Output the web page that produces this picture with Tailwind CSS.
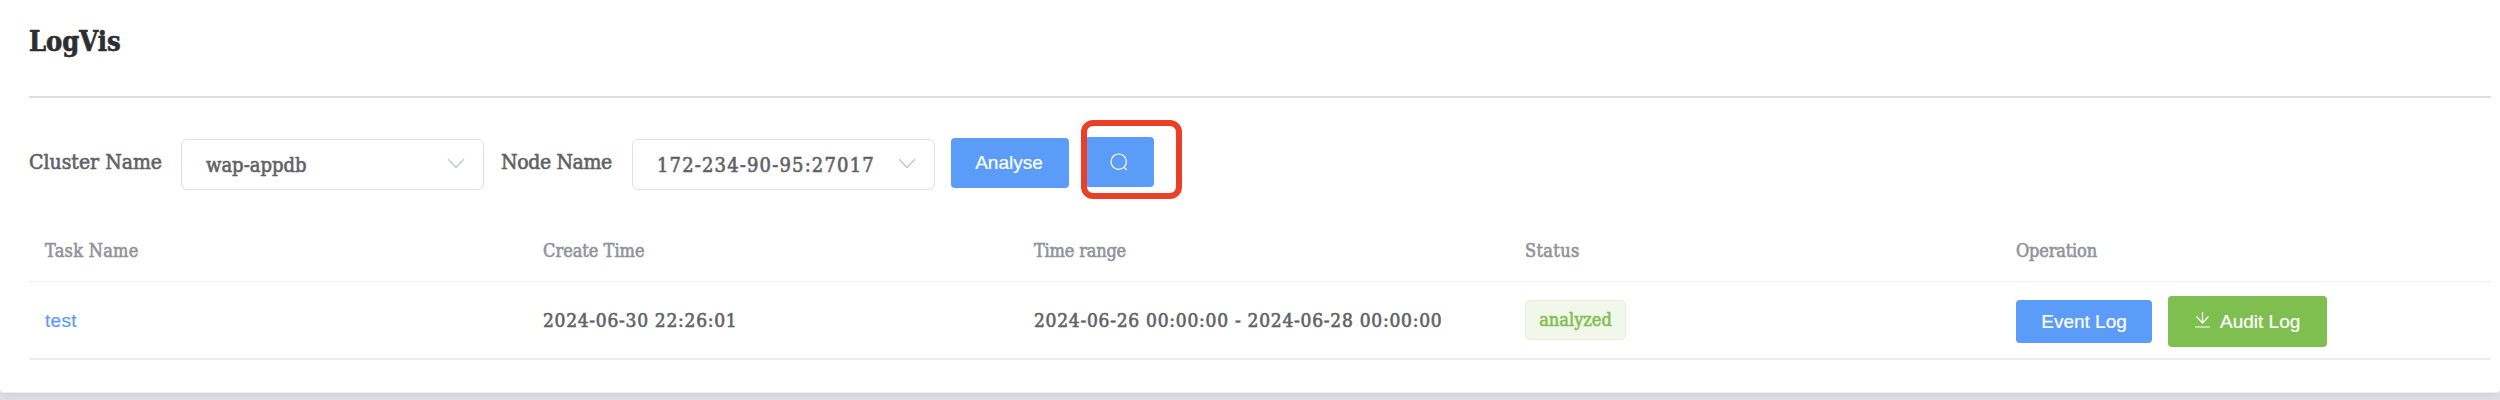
<!DOCTYPE html>
<html lang="en">
<head>
<meta charset="utf-8">
<title>LogVis</title>
<script src="https://cdn.jsdelivr.net/npm/@tailwindcss/browser@4"></script>
</head>
<body class="h-[400px] overflow-hidden bg-[#e0e4e8] font-['DejaVu_Serif_Condensed','DejaVu_Serif',serif] text-[#606266] [-webkit-text-stroke:0.6px_currentColor]">
<main class="h-[393px] rounded-b-[4px] border-b border-[#ebeef2] bg-white pl-[29px] pr-[9px] shadow-[0_2px_12px_rgba(0,0,0,0.1)]">
  <header class="h-[98px] border-b-2 border-[#dcdde4] pt-[22px]">
    <h1 class="text-[27px] leading-[40px] font-bold text-[#2c2e31]">LogVis</h1>
  </header>

  <section class="flex h-[126px] items-start pt-[39px] whitespace-nowrap">
    <label class="mt-[10px] w-[152px] text-[21px] leading-[30px]">Cluster Name</label>
    <div class="mt-[2px] flex h-[51px] w-[303px] items-center justify-between rounded-[6px] border border-[#dcdfe6] pr-[18px] pl-[24px]">
      <span class="text-[20px] leading-[28px]">wap-appdb</span>
      <svg class="mt-[-3px] h-[11px] w-[18px]" viewBox="0 0 18 11" fill="none" stroke="#c0c4cc" stroke-width="1.2"><path d="M1 1l8 8.5L17 1"/></svg>
    </div>
    <label class="mt-[10px] ml-[17px] w-[131px] text-[21px] leading-[30px] tracking-[-0.35px]">Node Name</label>
    <div class="mt-[2px] flex h-[51px] w-[303px] items-center justify-between rounded-[6px] border border-[#dcdfe6] pr-[18px] pl-[24px]">
      <span class="text-[20px] leading-[28px] tracking-[1.15px]">172-234-90-95:27017</span>
      <svg class="mt-[-3px] h-[11px] w-[18px]" viewBox="0 0 18 11" fill="none" stroke="#c0c4cc" stroke-width="1.2"><path d="M1 1l8 8.5L17 1"/></svg>
    </div>
    <button class="mt-px ml-[16px] h-[50px] w-[118px] rounded-[4px] bg-[#5b9cf8] pr-[2px] font-['Liberation_Sans',sans-serif] text-[19px] text-white [-webkit-text-stroke:0.2px_currentColor]">Analyse</button>
    <div class="relative ml-[16px] h-[50px] w-[69px]">
      <button class="flex h-[50px] w-[69px] items-center justify-center rounded-[4px] bg-[#5b9cf8]" aria-label="Search">
        <svg class="ml-[-1px] h-[18px] w-[18px]" viewBox="0 0 18 18" fill="none" stroke="#fff" stroke-width="1.2"><circle cx="8.7" cy="8.7" r="7.7"/><path d="M13.8 14l3 3.2"/></svg>
      </button>
      <div class="absolute top-[-17.5px] left-[-4px] h-[79.5px] w-[100.5px] rounded-[12px] border-6 border-[#ea4025]"></div>
    </div>
  </section>

  <section class="whitespace-nowrap">
    <div class="grid h-[58px] grid-cols-[498px_491px_491px_491px_491px] border-b border-[#ebeef5] pt-[13px] pl-[16px] text-[18px] leading-[28px] text-[#909399]">
      <span class="tracking-[0.28px]">Task Name</span>
      <span>Create Time</span>
      <span class="tracking-[-0.18px]">Time range</span>
      <span class="tracking-[0.35px]">Status</span>
      <span class="tracking-[-0.17px]">Operation</span>
    </div>
    <div class="grid h-[78px] grid-cols-[498px_491px_491px_491px_491px] items-center border-b-2 border-[#ebecf2] pl-[16px] text-[19px] leading-[28px]">
      <a class="pt-px font-['Liberation_Sans',sans-serif] tracking-[0.3px] text-[#5b9cf8] [-webkit-text-stroke:0.2px_currentColor]">test</a>
      <span class="tracking-[0.72px]">2024-06-30 22:26:01</span>
      <span class="tracking-[0.74px]">2024-06-26 00:00:00 - 2024-06-28 00:00:00</span>
      <span class="flex h-[40px] w-[101px] items-center justify-center rounded-[5px] border border-[#e1f3d8] bg-[#f2f7ec] text-[18px] text-[#7ebf50]">analyzed</span>
      <div class="flex items-center gap-[16px] pt-[2px] font-['Liberation_Sans',sans-serif] text-white [-webkit-text-stroke:0.2px_currentColor]">
        <button class="h-[43px] w-[136px] rounded-[4px] bg-[#5b9cf8] pt-px">Event Log</button>
        <button class="flex h-[51px] w-[159px] items-center gap-[10px] rounded-[4px] bg-[#7ebf50] pl-[27px]">
          <svg class="mt-[-2px] h-[16px] w-[15px]" viewBox="0 0 15 16" fill="none" stroke="#fff" stroke-width="1.2"><path d="M7.5 0v11M1.5 4.5l6 6.5 6-6.5M0 15h15"/></svg>
          <span class="pt-px">Audit Log</span>
        </button>
      </div>
    </div>
  </section>
</main>
</body>
</html>
